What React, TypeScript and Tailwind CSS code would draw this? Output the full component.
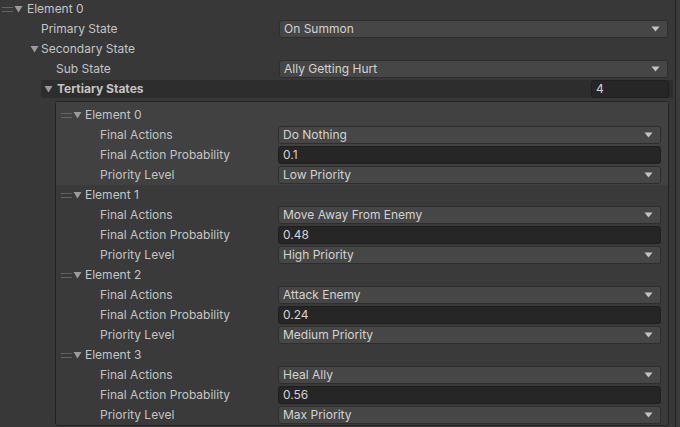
import React from "react";

const font = { fontFamily: "Inter, 'Noto Sans', sans-serif" };

function Arrow() {
    return (
        <svg width="9" height="6" viewBox="0 0 9 6" className="shrink-0">
            <path d="M0.5 0.5 L8.5 0.5 L4.5 5.5 Z" fill="#c4c4c4" />
        </svg>
    );
}

function Fold() {
    return (
        <svg width="9" height="8" viewBox="0 0 9 8" className="shrink-0">
            <path d="M0.5 1 L8.5 1 L4.5 7.5 Z" fill="#9a9a9a" />
        </svg>
    );
}

function Handle() {
    return (
        <div className="flex flex-col gap-[3px] w-[11px] shrink-0">
            <div className="h-px bg-[#646464]" />
            <div className="h-px bg-[#646464]" />
        </div>
    );
}

function Dropdown({ value }: { value: string }) {
    return (
        <div className="flex-1 h-[18px] flex items-center justify-between pl-[4px] pr-[7px] bg-[#464646] border border-[#2e2e2e] rounded-[3px]">
            <span className="text-[#d2d2d2] leading-none">{value}</span>
            <Arrow />
        </div>
    );
}

function TextField({ value }: { value: string }) {
    return (
        <div className="flex-1 h-[18px] flex items-center pl-[4px] bg-[#262626] border border-[#1f1f1f] rounded-[3px]">
            <span className="text-[#d2d2d2] leading-none">{value}</span>
        </div>
    );
}

function FieldRow({ label, children }: { label: string; children: React.ReactNode }) {
    return (
        <div className="h-[20px] flex items-center">
            <span className="pl-[44px] flex-none text-[#c4c4c4]">{label}</span>
            <div className="flex-1" />
            <div className="w-[383px] flex">{children}</div>
        </div>
    );
}

const elements = [
    { action: "Do Nothing", prob: "0.1", priority: "Low Priority" },
    { action: "Move Away From Enemy", prob: "0.48", priority: "High Priority" },
    { action: "Attack Enemy", prob: "0.24", priority: "Medium Priority" },
    { action: "Heal Ally", prob: "0.56", priority: "Max Priority" },
];

export default function App() {
    return (
        <div className="w-[680px] h-[427px] overflow-hidden bg-[#383838] flex text-[12px]" style={font}>
            <div className="w-[675px] flex flex-col -mt-px">
                {/* top level element */}
                <div className="h-[20px] flex items-center pl-[2px]">
                    <Handle />
                    <div className="ml-[1px] mr-[4px]"><Fold /></div>
                    <span className="text-[#c4c4c4]">Element 0</span>
                </div>
                <div className="h-[20px] flex items-center pr-[7px]">
                    <span className="pl-[41px] w-[279px] text-[#c4c4c4]">Primary State</span>
                    <Dropdown value="On Summon" />
                </div>
                <div className="h-[20px] flex items-center pl-[30px]">
                    <div className="mr-[2px]"><Fold /></div>
                    <span className="text-[#c4c4c4]">Secondary State</span>
                </div>
                <div className="h-[20px] flex items-center pr-[7px]">
                    <span className="pl-[56px] w-[279px] text-[#c4c4c4]">Sub State</span>
                    <Dropdown value="Ally Getting Hurt" />
                </div>
                <div className="h-[20px] flex items-center pl-[41px] pr-[2px]">
                    <div className="flex-1 h-[18px] flex items-center bg-[#2d2d2d] pl-[3px] pr-[4px]">
                        <div className="mr-[4px]"><Fold /></div>
                        <span className="font-bold text-[#c4c4c4] flex-1">Tertiary States</span>
                        <div className="w-[78px] h-[18px] flex items-center pl-[4px] bg-[#262626] border border-[#1f1f1f] rounded-[3px]">
                            <span className="text-[#d2d2d2]">4</span>
                        </div>
                    </div>
                </div>

                {/* list box */}
                <div className="ml-[55px] mr-[6px] mt-[2px] border border-[#232323] rounded-[3px] bg-[#3a3a3a] pt-[3px]">
                    {elements.map((el, i) => (
                        <div key={i} className={i === 0 ? "bg-[#414141] -mt-[3px] pt-[3px]" : ""}>
                            <div className="h-[20px] flex items-center pl-[5px]">
                                <Handle />
                                <div className="ml-[1px] mr-[3px]"><Fold /></div>
                                <span className="text-[#c4c4c4]">Element {i}</span>
                            </div>
                            <div className="pr-[7px]">
                                <FieldRow label="Final Actions">
                                    <Dropdown value={el.action} />
                                </FieldRow>
                                <FieldRow label="Final Action Probability">
                                    <TextField value={el.prob} />
                                </FieldRow>
                                <FieldRow label="Priority Level">
                                    <Dropdown value={el.priority} />
                                </FieldRow>
                            </div>
                        </div>
                    ))}
                </div>
            </div>
            <div className="w-px bg-[#232323]" />
            <div className="flex-1 bg-[#3c3c3c]" />
        </div>
    );
}
